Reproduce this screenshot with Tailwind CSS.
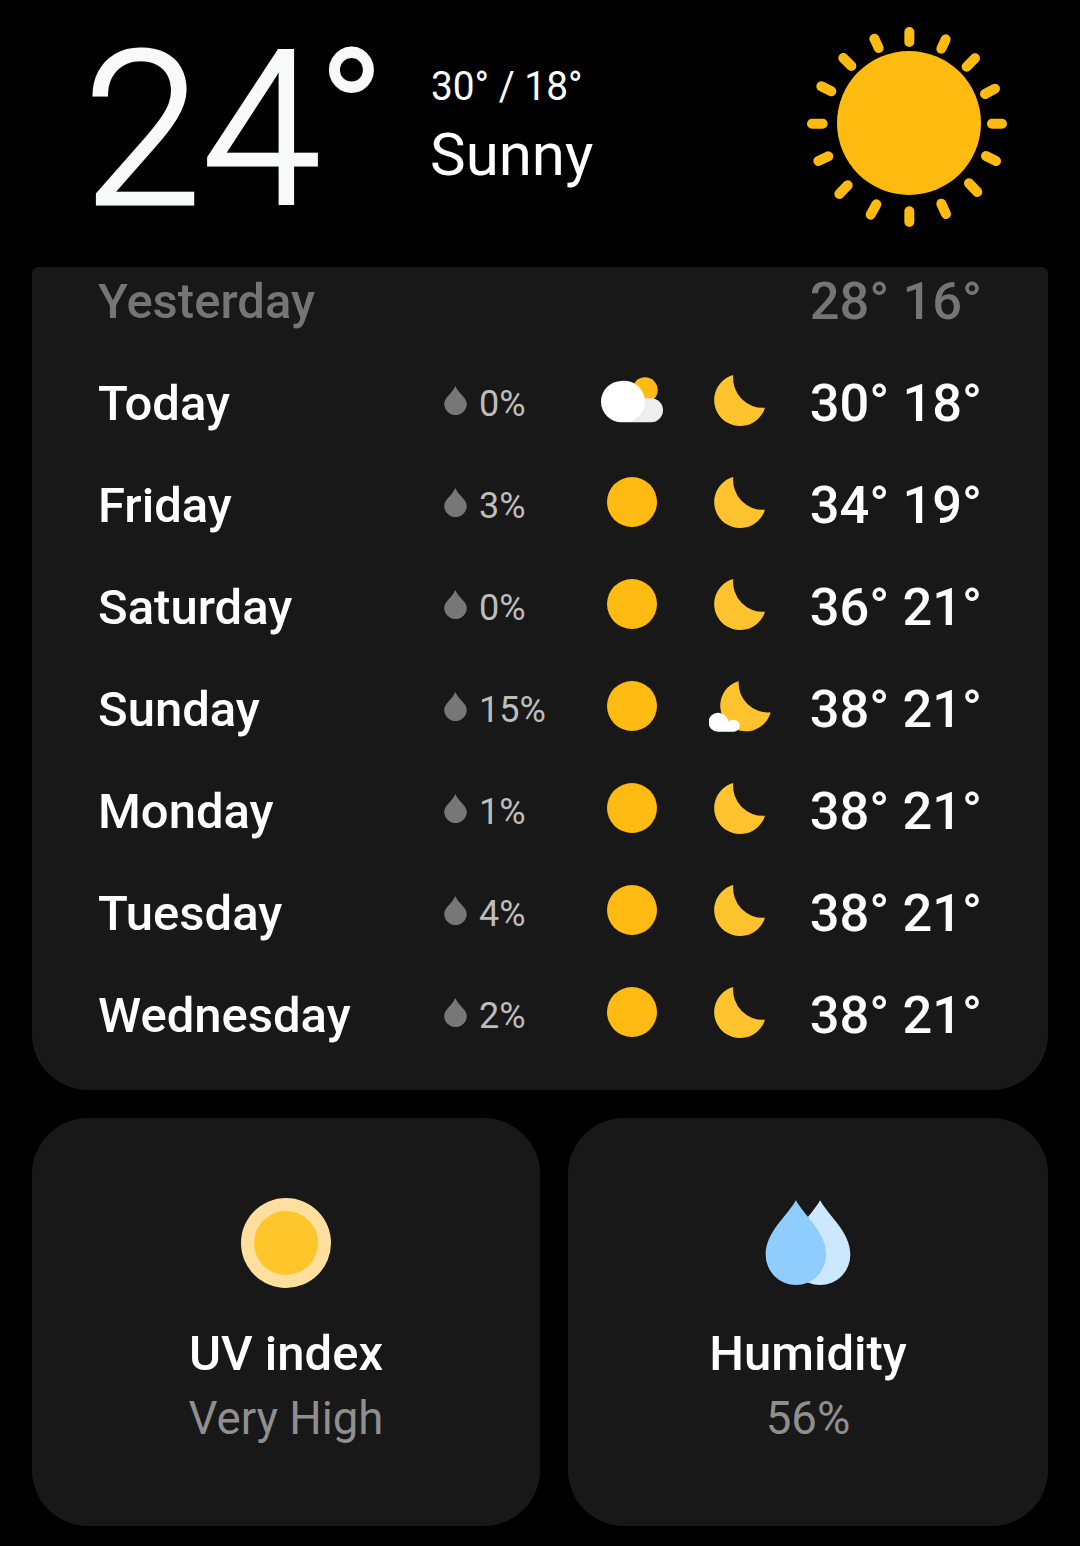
<!DOCTYPE html>
<html lang="en">
<head>
<meta charset="UTF-8">
<title>Weather</title>
<script src="https://cdn.jsdelivr.net/npm/@tailwindcss/browser@4"></script>
</head>
<body class="bg-black text-white font-['Roboto',sans-serif] w-[1080px] h-[1546px] overflow-hidden">

<svg width="0" height="0" class="absolute">
  <defs>
    <symbol id="drop" viewBox="45 77 67 86"><path d="M78 77C68 100 45 112 45 130A33.500 33.500 0 0 0 112 130C112 112 88 100 78 77Z" fill="#777"/></symbol>
    <symbol id="moon" viewBox="852 43 154 154"><path d="M912 43A77 77 0 1 0 1006 140A88 88 0 0 1 912 43Z" fill="#ffc42d"/></symbol>
    <symbol id="sun" viewBox="0 0 50 50"><circle cx="25" cy="25" r="25" fill="#ffbb12"/></symbol>
  </defs>
</svg>

<!-- current conditions -->
<header class="h-[267px] flex relative">
  <div class="w-[431px] pl-[83px] pt-[8px] shrink-0">
    <div class="text-[216px] leading-[216px] font-light text-[#f8faf9] [-webkit-text-stroke:3px_#f8faf9] origin-left scale-x-[.99] whitespace-nowrap w-fit">24<span class="text-[184px] font-normal align-[25px] [-webkit-text-stroke:0px] -ml-[3px]">°</span></div>
  </div>
  <div class="pt-[63px] w-[349px] shrink-0">
    <div class="text-[40px] leading-[47px] origin-left scale-x-[.97] w-fit whitespace-nowrap">30° / 18°</div>
    <div class="text-[60px] leading-[70px] mt-[10px] -ml-[1px]">Sunny</div>
  </div>
  <svg class="mt-[10px]" width="250" height="230" viewBox="0 0 750 690" fill="none" stroke="#ffbb10" stroke-width="30" stroke-linecap="round">
    <circle cx="387" cy="339" r="216" fill="#ffbb10" stroke="none"/>
    <path d="M388 66V96M497 88L484 116M585 145L560 170M645 236L615 252M636 341H666M618 438L648 453M567 520L592 546M484 581L498 612M388 604V636M289 583L272 614M203 526L178 552M145 439L115 453M96 341H128M124 229L154 244M190 144L214 168M283 86L296 114"/>
  </svg>
</header>

<!-- daily forecast, scrolled under the header -->
<section class="mx-[32px] h-[823px] bg-[#181818] rounded-b-[56px] rounded-t-[6px] overflow-hidden">
  <div id="days" class="-mt-[16px]"></div>
</section>

<!-- UV and humidity -->
<section class="mx-[32px] mt-[28px] flex gap-[28px] h-[408px]">
  <div class="w-[508px] bg-[#181818] rounded-[56px] flex flex-col items-center pt-[80px]">
    <svg width="90" height="90" viewBox="0 0 90 90"><circle cx="45" cy="45" r="45" fill="#ffdf9e"/><circle cx="45" cy="45" r="32" fill="#ffc62c"/></svg>
    <div class="text-[49px] leading-[56px] font-medium mt-[38px]">UV index</div>
    <div class="text-[45.500px] leading-[52px] text-[#8f8f8f] mt-[11px]">Very High</div>
  </div>
  <div class="w-[480px] bg-[#181818] rounded-[56px] flex flex-col items-center pt-[80px]">
    <svg width="86" height="90" viewBox="46 33 256 258">
      <path d="M210 35C182 85 120 130 120 197A90 90 0 0 0 300 197C300 130 238 85 210 35Z" fill="#cce8ff"/>
      <path d="M138 35C110 85 48 130 48 197A90 90 0 0 0 228 197C228 130 166 85 138 35Z" fill="#90cdff"/>
    </svg>
    <div class="text-[49px] leading-[56px] font-medium mt-[38px]">Humidity</div>
    <div class="text-[45.500px] leading-[52px] text-[#8f8f8f] mt-[11px]">56%</div>
  </div>
</section>

<script>
  const DAYS = [
    { name: 'Today', rain: '0%', day: 'cloud', night: 'moon', temp: '30° 18°' },
    { name: 'Friday', rain: '3%', day: 'sun', night: 'moon', temp: '34° 19°' },
    { name: 'Saturday', rain: '0%', day: 'sun', night: 'moon', temp: '36° 21°' },
    { name: 'Sunday', rain: '15%', day: 'sun', night: 'cloudmoon', temp: '38° 21°' },
    { name: 'Monday', rain: '1%', day: 'sun', night: 'moon', temp: '38° 21°' },
    { name: 'Tuesday', rain: '4%', day: 'sun', night: 'moon', temp: '38° 21°' },
    { name: 'Wednesday', rain: '2%', day: 'sun', night: 'moon', temp: '38° 21°' },
  ];

  const dayIcon = {
    sun: '<svg width="50" height="50" class="mx-auto -mt-[8px]"><use href="#sun"/></svg>',
    cloud: `<svg width="62" height="46" viewBox="513 55 186 136" class="mx-auto -mt-[8px]">
        <circle cx="645" cy="93" r="38" fill="#ffbb12"/>
        <rect x="560" y="118" width="139" height="72" rx="36" fill="#eeeeee"/>
        <path d="M575 66A62 62 0 0 0 575 190H590A62 62 0 0 0 575 66Z" fill="#fff"/>
      </svg>`,
  };

  const nightIcon = {
    moon: '<svg width="52" height="52" class="-ml-[1px] -mt-[6px]"><use href="#moon"/></svg>',
    cloudmoon: `<svg width="62" height="52" viewBox="58 33 186 156" class="-ml-[5px] -mt-[6px]">
        <path d="M147 33A77 77 0 1 0 243 127A88 88 0 0 1 147 33Z" fill="#ffc42d"/>
        <path d="M85 128A28 28 0 0 0 85 185H132A18 18 0 0 0 132 149C126 149 122 151 118 154C113 139 100 128 85 128Z" fill="#fff"/>
      </svg>`,
  };

  const rowClass = 'h-[102px] pl-[66px] pr-[66px] grid grid-cols-[346px_156px_64px_50px_52px_1fr] items-center';

  const rows = [`<div class="${rowClass} text-[#757575] text-[49px] font-medium">
      <div class="col-span-5">Yesterday</div>
      <div class="text-[52.400px] whitespace-nowrap justify-self-end -mt-[2px]">28° 16°</div>
    </div>`];

  DAYS.forEach(d => {
    rows.push(`<div class="${rowClass} text-[49px] font-medium">
      <div>${d.name}</div>
      <div class="flex items-center text-[36px] font-normal text-[#bdbdbd]">
        <svg width="23" height="29" class="-mt-[8px]"><use href="#drop"/></svg>
        <span class="ml-[12px]">${d.rain}</span>
      </div>
      <div>${dayIcon[d.day]}</div>
      <div></div>
      <div>${nightIcon[d.night]}</div>
      <div class="text-[52.400px] whitespace-nowrap justify-self-end -mt-[2px]">${d.temp}</div>
    </div>`);
  });

  document.getElementById('days').innerHTML = rows.join('');
</script>
</body>
</html>
